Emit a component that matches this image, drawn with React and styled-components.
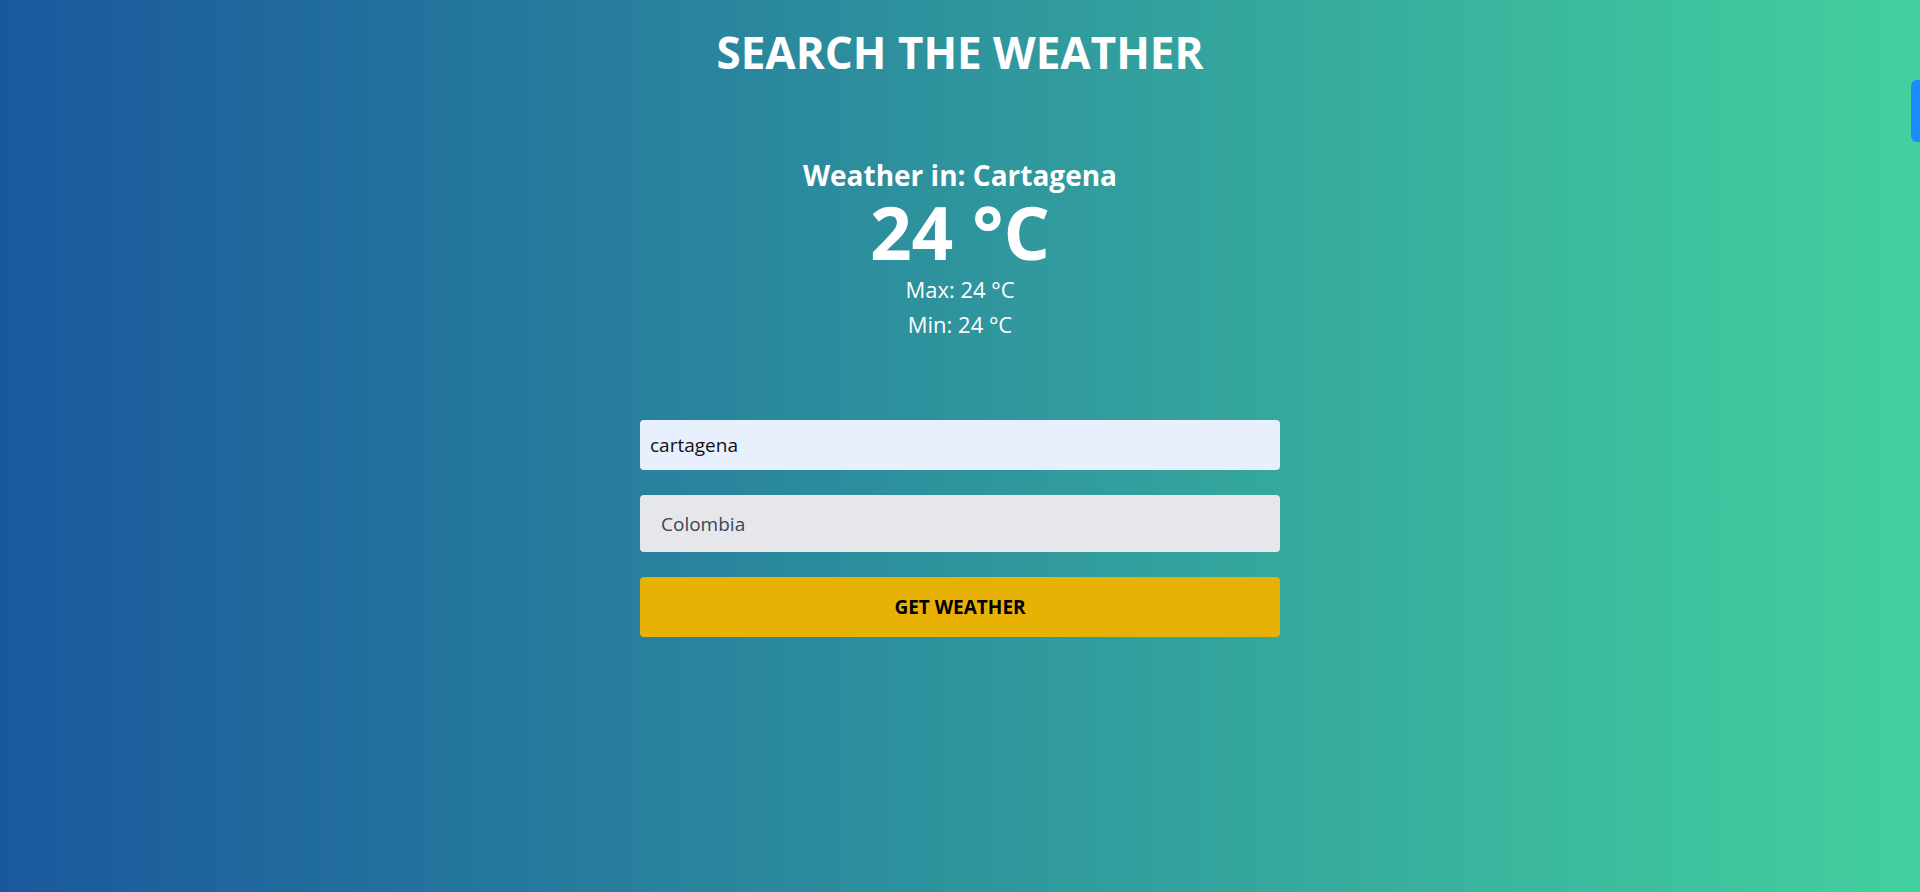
import { useState } from 'react';
import styled, { createGlobalStyle } from 'styled-components';

const GlobalStyle = createGlobalStyle`
	html, body {
		margin: 0;
		padding: 0;
	}
	body {
		font-family: 'Open Sans', 'Noto Sans', sans-serif;
		background: linear-gradient(to right, #1a589d, #43d09e);
		min-height: 100vh;
		overflow: hidden;
	}
`;

const weather = {
	city: 'Cartagena',
	temp: 24,
	max: 24,
	min: 24,
};

const App = () => {
	const [city, setCity] = useState('cartagena');
	const [country, setCountry] = useState('');

	return (
		<>
			<GlobalStyle />
			<Page>
				<Title>SEARCH THE WEATHER</Title>

				<Result>
					<Place>Weather in: {weather.city}</Place>
					<Temp>{weather.temp} °C</Temp>
					<Range>Max: {weather.max} °C</Range>
					<Range>Min: {weather.min} °C</Range>
				</Result>

				<Form onSubmit={(e) => e.preventDefault()}>
					<CityInput
						type='text'
						value={city}
						onChange={(e) => setCity(e.target.value)}
					/>
					<CountryInput
						type='text'
						placeholder='Colombia'
						value={country}
						onChange={(e) => setCountry(e.target.value)}
					/>
					<Button type='submit'>GET WEATHER</Button>
				</Form>
			</Page>
			<SideTab />
		</>
	);
};

// whole page, column of centred blocks
const Page = styled.div`
	display: flex;
	flex-direction: column;
	align-items: center;
	min-height: 100vh;
	color: white;
	padding-top: 24px;
	box-sizing: border-box;
`;

const Title = styled.h1`
	margin: 0;
	font-size: 44px;
	line-height: 56px;
	font-weight: 700;
`;

const Result = styled.div`
	display: flex;
	flex-direction: column;
	align-items: center;
	margin-top: 78px;
`;

const Place = styled.h2`
	margin: 0;
	font-size: 28px;
	line-height: 34px;
	font-weight: 700;
`;

const Temp = styled.div`
	font-size: 73px;
	line-height: 80px;
	font-weight: 700;
`;

const Range = styled.p`
	margin: 0;
	font-size: 22px;
	line-height: 35px;
`;

const Form = styled.form`
	display: flex;
	flex-direction: column;
	gap: 25px;
	width: 640px;
	margin-top: 78px;
`;

const Field = styled.input`
	box-sizing: border-box;
	width: 100%;
	border: none;
	border-radius: 4px;
	font-family: 'Open Sans', 'Noto Sans', sans-serif;
	font-size: 19px;
	outline: none;
`;

const CityInput = styled(Field)`
	height: 50px;
	padding: 0 10px;
	background: #e8f0fe;
	color: #111;
`;

const CountryInput = styled(Field)`
	height: 57px;
	padding: 0 21px;
	background: #e6e7ea;
	color: #333;

	&::placeholder {
		color: #3c4457;
	}
`;

const Button = styled.button`
	height: 60px;
	border: none;
	border-radius: 4px;
	background: #e8b106;
	color: #000;
	font-family: 'Open Sans', 'Noto Sans', sans-serif;
	font-size: 19px;
	font-weight: 700;
	cursor: pointer;
`;

// blue tab stuck to the right edge
const SideTab = styled.div`
	position: fixed;
	top: 80px;
	right: 0;
	width: 9px;
	height: 62px;
	background: #1a8cff;
	border-radius: 6px 0 0 6px;
`;

export default App;
